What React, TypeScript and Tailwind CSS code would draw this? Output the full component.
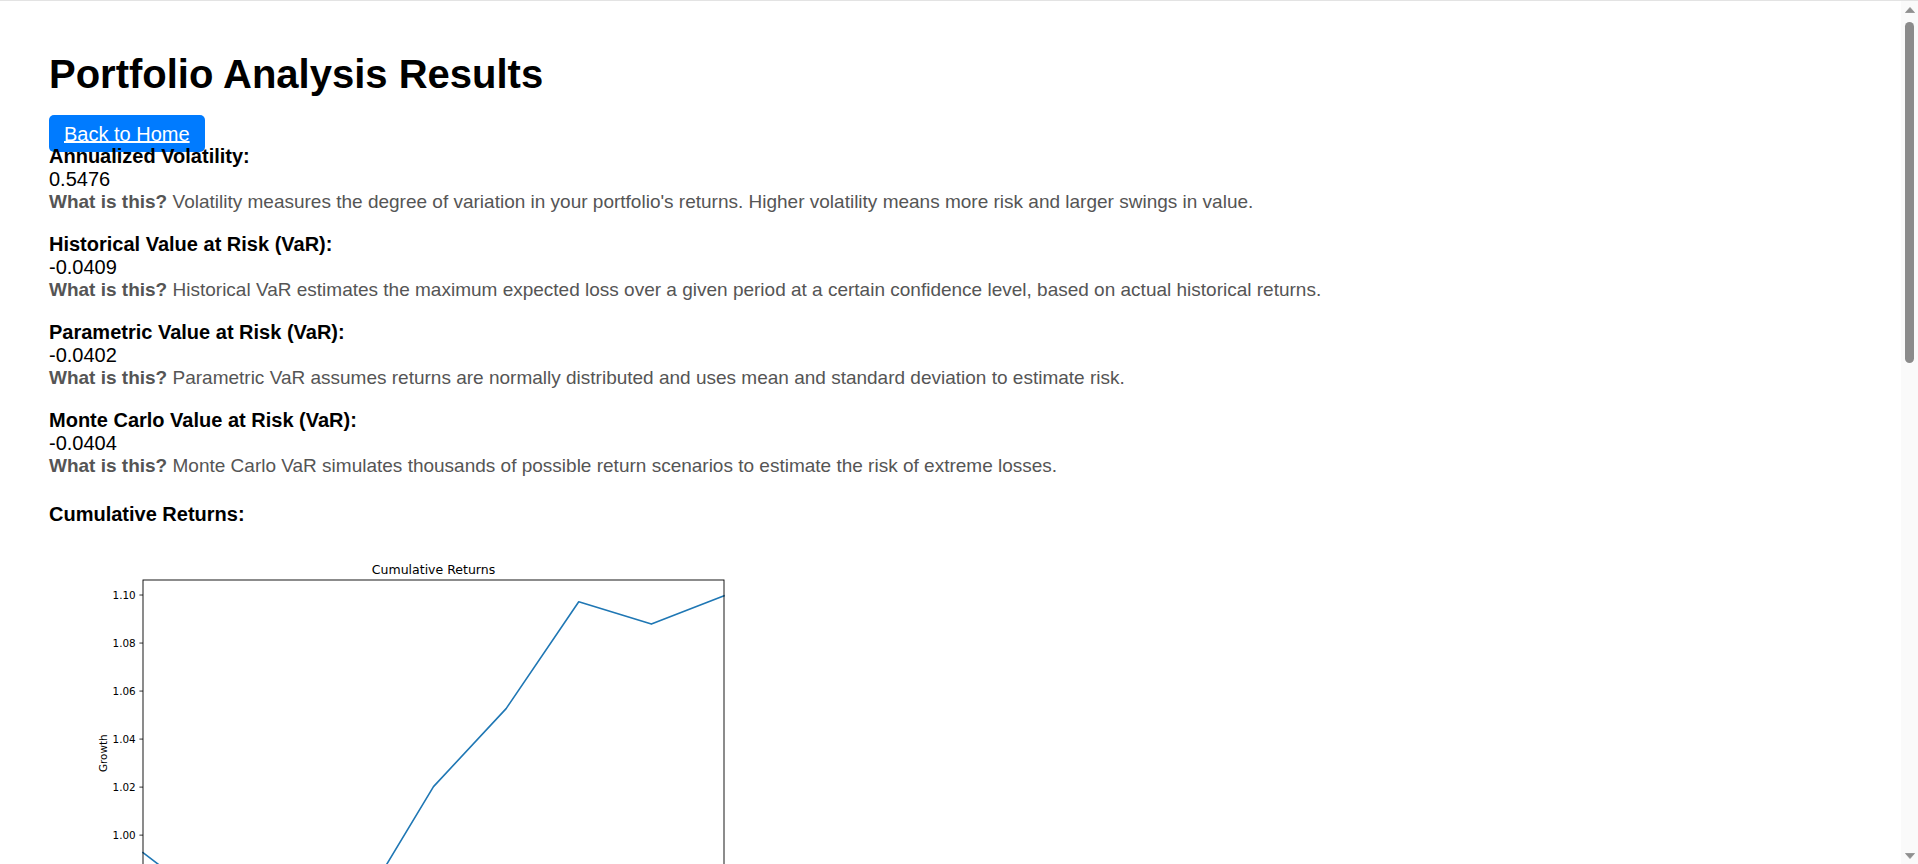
import React from "react";

const metrics = [
  {
    title: "Annualized Volatility:",
    value: "0.5476",
    desc: "Volatility measures the degree of variation in your portfolio's returns. Higher volatility means more risk and larger swings in value.",
  },
  {
    title: "Historical Value at Risk (VaR):",
    value: "-0.0409",
    desc: "Historical VaR estimates the maximum expected loss over a given period at a certain confidence level, based on actual historical returns.",
  },
  {
    title: "Parametric Value at Risk (VaR):",
    value: "-0.0402",
    desc: "Parametric VaR assumes returns are normally distributed and uses mean and standard deviation to estimate risk.",
  },
  {
    title: "Monte Carlo Value at Risk (VaR):",
    value: "-0.0404",
    desc: "Monte Carlo VaR simulates thousands of possible return scenarios to estimate the risk of extreme losses.",
  },
];

const values = [0.9927, 0.9697, 0.9685, 0.97, 1.0202, 1.0527, 1.0972, 1.0879, 1.0997];
const AX_L = 94;
const AX_R = 675;
const AX_T = 54;
const AX_B = 400.5;
const Y_MAX = 1.10626;
const PX = 2401;
const yOf = (v: number) => AX_T + (Y_MAX - v) * PX;
const xOf = (i: number) => AX_L + ((AX_R - AX_L) / (values.length - 1)) * i;

function Chart() {
  const ticks = [1.1, 1.08, 1.06, 1.04, 1.02, 1.0, 0.98];
  const pts = values.map((v, i) => `${xOf(i).toFixed(2)},${yOf(v).toFixed(2)}`).join(" ");
  return (
    <svg width="750" height="450" viewBox="0 0 750 450" className="block">
      <rect x="0" y="0" width="750" height="450" fill="#ffffff" />
      <text
        x={(AX_L + AX_R) / 2}
        y={AX_T - 6.25}
        textAnchor="middle"
        fontFamily="'DejaVu Sans', sans-serif"
        fontSize="12.5"
        fill="#000"
      >
        Cumulative Returns
      </text>
      <g fontFamily="'DejaVu Sans', sans-serif" fontSize="10.4" fill="#000">
        {ticks.map((t) => (
          <g key={t}>
            <line x1={AX_L - 3.6} x2={AX_L} y1={yOf(t)} y2={yOf(t)} stroke="#000" strokeWidth="0.8" />
            <text x={AX_L - 7.3} y={yOf(t)} textAnchor="end" dominantBaseline="central">
              {t.toFixed(2)}
            </text>
          </g>
        ))}
        <text
          x={54}
          y={(AX_T + AX_B) / 2}
          textAnchor="middle"
          dominantBaseline="central"
          transform={`rotate(-90 54 ${(AX_T + AX_B) / 2})`}
        >
          Growth
        </text>
      </g>
      <polyline
        points={pts}
        fill="none"
        stroke="#1f77b4"
        strokeWidth="1.6"
        strokeLinejoin="round"
        strokeLinecap="square"
      />
      <rect
        x={AX_L}
        y={AX_T}
        width={AX_R - AX_L}
        height={AX_B - AX_T}
        fill="none"
        stroke="#000"
        strokeWidth="0.9"
      />
    </svg>
  );
}

function Scrollbar() {
  return (
    <div className="w-[17px] shrink-0 bg-[#fafafa] flex flex-col items-center">
      <div className="h-[17px] w-full flex items-center justify-center">
        <svg width="10" height="6" viewBox="0 0 10 6">
          <path d="M0.5 5.5 L5 0.5 L9.5 5.5 Z" fill="#8f8f8f" stroke="#8f8f8f" strokeLinejoin="round" strokeWidth="0.8" />
        </svg>
      </div>
      <div className="mt-[4px] h-[341px] w-[9px] rounded-full bg-[#8b8b8b]" />
      <div className="flex-1" />
      <div className="h-[17px] w-full flex items-center justify-center">
        <svg width="10" height="6" viewBox="0 0 10 6">
          <path d="M0.5 0.5 L5 5.5 L9.5 0.5 Z" fill="#8f8f8f" stroke="#8f8f8f" strokeLinejoin="round" strokeWidth="0.8" />
        </svg>
      </div>
    </div>
  );
}

export default function App() {
  return (
    <div
      className="h-screen flex flex-col bg-white border-t border-[#e3e3e3] text-black"
      style={{ fontFamily: "'Liberation Sans', Arial, sans-serif" }}
    >
      <div className="flex-1 min-h-0 flex">
        <main className="flex-1 min-w-0 overflow-hidden">
          <div className="pl-[49px] pt-[50px]">
            <h1 className="text-[40px] font-bold leading-[46px] mb-[25px]">Portfolio Analysis Results</h1>
            <div className="text-[20px] leading-[23px]">
              <a
                href="#"
                className="bg-[#007bff] text-white underline px-[15px] py-[7.5px] rounded-[5px]"
              >
                Back to Home
              </a>
            </div>
            {metrics.map((m) => (
              <div key={m.title} className="mb-[20px]">
                <div className="text-[20px] leading-[23px] font-bold">{m.title}</div>
                <div className="text-[20px] leading-[23px]">{m.value}</div>
                <p className="text-[19px] leading-[22px] text-[#555]">
                  <strong>What is this?</strong> {m.desc}
                </p>
              </div>
            ))}
            <div className="text-[20px] leading-[23px] font-bold mt-[26px]">Cumulative Returns:</div>
            <Chart />
          </div>
        </main>
        <Scrollbar />
      </div>
    </div>
  );
}
